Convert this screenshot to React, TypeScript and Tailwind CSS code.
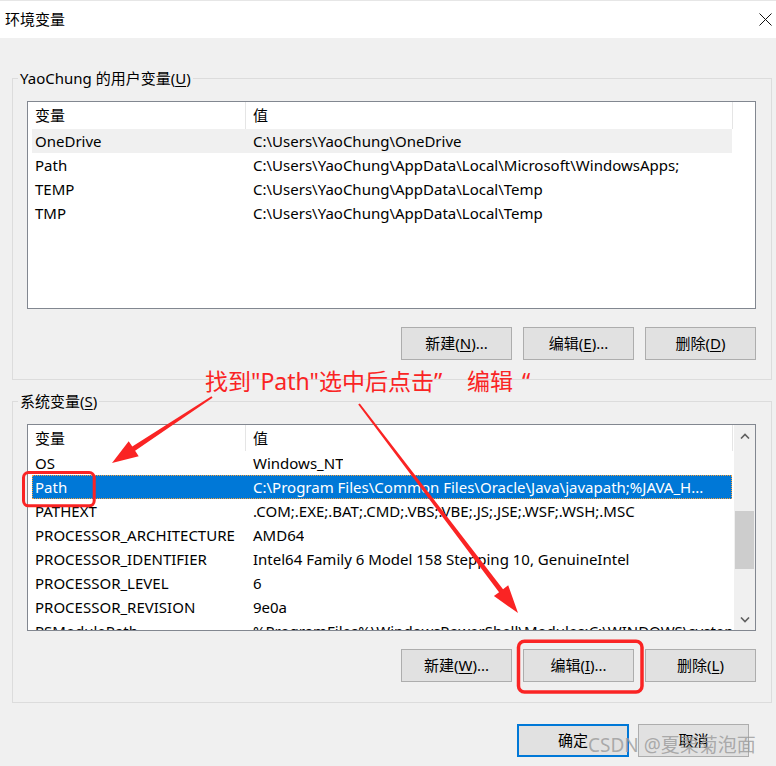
import type { ReactNode } from "react";

const FONT = "font-['Noto_Sans','Noto_Sans_CJK_SC',sans-serif]";

type Row = { name: string; value: string; hover?: boolean; selected?: boolean };

const USER_VARS: Row[] = [
  { name: "OneDrive", value: "C:\\Users\\YaoChung\\OneDrive", hover: true },
  { name: "Path", value: "C:\\Users\\YaoChung\\AppData\\Local\\Microsoft\\WindowsApps;" },
  { name: "TEMP", value: "C:\\Users\\YaoChung\\AppData\\Local\\Temp" },
  { name: "TMP", value: "C:\\Users\\YaoChung\\AppData\\Local\\Temp" },
];

const SYSTEM_VARS: Row[] = [
  { name: "OS", value: "Windows_NT" },
  {
    name: "Path",
    value: "C:\\Program Files\\Common Files\\Oracle\\Java\\javapath;%JAVA_H...",
    selected: true,
  },
  { name: "PATHEXT", value: ".COM;.EXE;.BAT;.CMD;.VBS;.VBE;.JS;.JSE;.WSF;.WSH;.MSC" },
  { name: "PROCESSOR_ARCHITECTURE", value: "AMD64" },
  { name: "PROCESSOR_IDENTIFIER", value: "Intel64 Family 6 Model 158 Stepping 10, GenuineIntel" },
  { name: "PROCESSOR_LEVEL", value: "6" },
  { name: "PROCESSOR_REVISION", value: "9e0a" },
  { name: "PSModulePath", value: "%ProgramFiles%\\WindowsPowerShell\\Modules;C:\\WINDOWS\\system32" },
];

function Key({ k }: { k: string }) {
  return <span className="underline underline-offset-2">{k}</span>;
}

function Btn({ children, primary }: { children: ReactNode; primary?: boolean }) {
  return (
    <div
      className={`flex h-[33px] w-[111px] items-center justify-center bg-[#e1e1e1] text-[15px] text-black ${
        primary ? "w-[112px] border-2 border-[#0078d7]" : "border border-[#adadad]"
      }`}
    >
      {children}
    </div>
  );
}

function ListView({ rows, headerH, height, scroll }: { rows: Row[]; headerH: string; height: string; scroll?: boolean }) {
  return (
    <div className={`flex w-[729px] overflow-hidden border border-[#828790] bg-white ${height}`}>
      <div className="flex w-[706px] flex-col overflow-hidden">
        <div className={`flex w-[705px] shrink-0 border-r border-[#e5e5e5] text-[15px] ${headerH}`}>
          <div className="flex w-[218px] items-center border-r border-[#e5e5e5] pl-[7px]">变量</div>
          <div className="flex items-center pl-[7px]">值</div>
        </div>
        {rows.map((r) => (
          <div
            key={r.name}
            className={`ml-[4px] flex h-[24px] w-[700px] shrink-0 items-center whitespace-nowrap text-[15px] ${
              r.selected
                ? "bg-[#0078d7] text-white outline-1 -outline-offset-1 outline-dotted outline-[#f7a13d]"
                : r.hover
                  ? "bg-[#f0f0f0] text-black"
                  : "text-black"
            }`}
          >
            <div className="w-[213px] shrink-0 pl-[3px]">{r.name}</div>
            <div className="overflow-hidden pl-[8px]">{r.value}</div>
          </div>
        ))}
      </div>
      {scroll ? (
        <div className="relative flex w-[21px] flex-col bg-[#f0f0f0]">
          <div className="flex h-[21px] items-center justify-center">
            <svg width="10" height="6" viewBox="0 0 10 6">
              <path d="M1 5.5 L5 1.5 L9 5.5" fill="none" stroke="#606060" strokeWidth="1.6" />
            </svg>
          </div>
          <div className="relative flex-1">
            <div className="absolute left-[1px] top-[65px] h-[58px] w-[19px] bg-[#cdcdcd]" />
          </div>
          <div className="flex h-[21px] items-center justify-center">
            <svg width="10" height="6" viewBox="0 0 10 6">
              <path d="M1 0.5 L5 4.5 L9 0.5" fill="none" stroke="#606060" strokeWidth="1.6" />
            </svg>
          </div>
        </div>
      ) : (
        <div className="w-[21px]" />
      )}
    </div>
  );
}

function Group({ title, children, className }: { title: ReactNode; children: ReactNode; className: string }) {
  return (
    <div className={`relative ml-[12px] flex h-[302px] w-[760px] flex-col border border-[#dcdcdc] pl-[14px] ${className}`}>
      <span className="absolute left-[5px] top-[-11px] h-[20px] bg-[#f0f0f0] px-[2px] text-[15px] leading-[20px] text-black">
        {title}
      </span>
      {children}
    </div>
  );
}

export default function App() {
  return (
    <div className={`relative h-[766px] w-[776px] overflow-hidden bg-[#f0f0f0] ${FONT}`}>
      <div className="relative flex h-[38px] items-center border-t border-[#e6e6e6] bg-white pl-[5px] text-[15px] text-black">
        环境变量
        <svg className="absolute left-[759px] top-[12px]" width="13" height="13" viewBox="0 0 13 13">
          <path d="M0.5 0.5 L12.5 12.5 M12.5 0.5 L0.5 12.5" stroke="#111" strokeWidth="1" />
        </svg>
      </div>

      <Group title={<>YaoChung 的用户变量(<Key k="U" />)</>} className="mt-[40px] pt-[22px]">
        <ListView rows={USER_VARS} headerH="h-[27px]" height="h-[208px]" />
        <div className="mt-[18px] flex w-[729px] justify-end gap-[11px]">
          <Btn>新建(<Key k="N" />)...</Btn>
          <Btn>编辑(<Key k="E" />)...</Btn>
          <Btn>删除(<Key k="D" />)</Btn>
        </div>
      </Group>

      <Group title={<>系统变量(<Key k="S" />)</>} className="mt-[21px] pt-[22px]">
        <ListView rows={SYSTEM_VARS} headerH="h-[26px]" height="h-[207px]" scroll />
        <div className="mt-[18px] flex w-[729px] justify-end gap-[11px]">
          <Btn>新建(<Key k="W" />)...</Btn>
          <Btn>编辑(<Key k="I" />)...</Btn>
          <Btn>删除(<Key k="L" />)</Btn>
        </div>
      </Group>

      <div className="mt-[21px] flex justify-end gap-[9px] pr-[27px]">
        <Btn primary>确定</Btn>
        <Btn>取消</Btn>
      </div>

      {/* annotation layer */}
      <div className="absolute left-[205px] top-[366px] flex h-[30px] items-center whitespace-nowrap text-[23px] leading-[30px] text-[#fa2424]">
        <span>找到</span>
        <span>"Path"</span>
        <span>选中后点击</span>
        <span className="w-[33px]">”</span>
        <span className="w-[55px]">编辑</span>
        <span>“</span>
      </div>
      <svg className="pointer-events-none absolute left-0 top-0" width="776" height="766" viewBox="0 0 776 766">
        <rect x="23.5" y="472.5" width="70.7" height="33.3" rx="5" fill="none" stroke="#fa2424" strokeWidth="3" />
        <rect x="518.5" y="641.3" width="123.5" height="50.7" rx="6" fill="none" stroke="#fa2424" strokeWidth="3.5" />
        <path
          d="M212.55 397.8 L135.1 450.8 L138.7 456.2 L112 463 L128.7 441.2 L132.3 446.6 L211.45 396.2 Z"
          fill="#fa2424"
        />
        <path
          d="M359.8 403.4 L503.04 589.2 L508.2 585.3 L518 613 L493.9 596.1 L499.06 592.2 L358.2 404.6 Z"
          fill="#fa2424"
        />
      </svg>
      <span className="absolute left-[588px] top-[732px] whitespace-nowrap text-[19px] leading-[26px] text-[#9a9a9a]/80">
        CSDN @夏栗菊泡面
      </span>
    </div>
  );
}
